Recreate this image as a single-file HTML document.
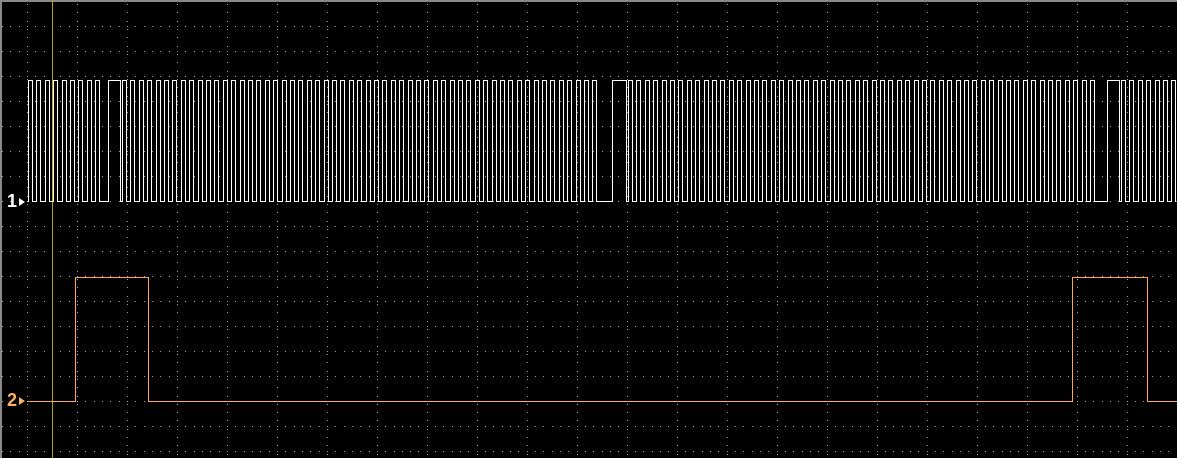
<!DOCTYPE html>
<html><head><style>
html,body{margin:0;padding:0;background:#000;}
#c{position:relative;width:1177px;height:458px;overflow:hidden;background:#000;}
.lbl{position:absolute;font:bold 18px "Liberation Sans",sans-serif;}
</style></head><body>
<div id="c">
<svg id="s" width="1177" height="458" style="position:absolute;left:0;top:0" shape-rendering="crispEdges"></svg>
<div class="lbl" style="left:7px;top:191px;color:#fff">1</div>
<div class="lbl" style="left:7px;top:390px;color:#ffb060">2</div>
</div>
<script>
var s=document.getElementById('s'),h='';
h+='<rect x="0" y="0" width="1177" height="2" fill="#888"/><rect x="0" y="0" width="2" height="458" fill="#888"/>';
var d='';
for(var x=27;x<1177;x+=50){for(var y=4;y<458;y+=8.33)d+='M'+x+' '+Math.round(y)+'h1v1h-1z';}
for(var y=26;y<458;y+=25){for(var x=2;x<1177;x+=8.33)d+='M'+Math.round(x)+' '+y+'h1v1h-1z';}
h+='<path d="'+d+'" fill="#a0a0a0"/>';
h+='<rect x="52" y="0" width="1" height="458" fill="#b8a800"/>';
var H=80.5,L=201.5,p='M27.5 '+L;
function X(v){return (Math.round(v)+0.5);}
function seg(a,b){for(var x=a;x<b-4;x+=8.4){p+=' L'+X(x)+' '+L+' L'+X(x)+' '+H+' L'+X(x+4)+' '+H+' L'+X(x+4)+' '+L;}p+=' L'+X(b)+' '+L;}
seg(28,100);p+=' L108.5 '+L+' L108.5 '+H+' L120.5 '+H+' L120.5 '+L;
seg(122,602);p+=' L612.5 '+L+' L612.5 '+H+' L626.5 '+H+' L626.5 '+L;
seg(628,1100);p+=' L1107.5 '+L+' L1107.5 '+H+' L1119.5 '+H+' L1119.5 '+L;
seg(1121,1176);
h+='<path d="'+p+'" fill="none" stroke="#fff" stroke-width="1"/>';
var o='#ffa850';
function r(x,y,w,hh){h+='<rect x="'+x+'" y="'+y+'" width="'+w+'" height="'+hh+'" fill="'+o+'"/>';}
r(27,401,49,1);r(75,277,1,125);r(75,277,74,1);r(148,277,1,125);r(148,401,925,1);r(1072,277,1,125);r(1072,277,76,1);r(1147,277,1,125);r(1147,401,30,1);
h+='<path d="M19 198l6 4l-6 4z" fill="#fff" shape-rendering="auto"/><path d="M19 397l6 4l-6 4z" fill="#ffb060" shape-rendering="auto"/>';
s.innerHTML=h;
</script>
</body></html>
